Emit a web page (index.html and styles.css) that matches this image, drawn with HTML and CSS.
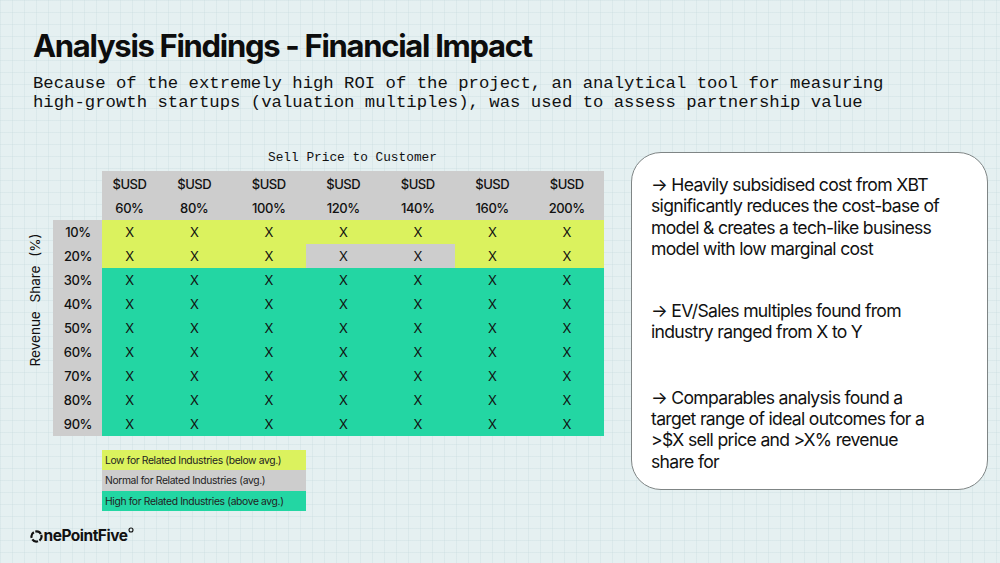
FILE: index.html
```html
<!DOCTYPE html>
<html>
<head>
<meta charset="utf-8">
<link rel="stylesheet" href="styles.css">
</head>
<body>
<div class="slide">
  <h1 class="title">Analysis Findings - Financial Impact</h1>
  <p class="subtitle">Because of the extremely high ROI of the project, an analytical tool for measuring<br>high-growth startups (valuation multiples), was used to assess partnership value</p>
  <div class="content">
    <div class="left">
      <div class="axis-x">Sell Price to Customer</div>
      <div class="table-wrap">
        <div class="axis-y"><span>Revenue Share (%)</span></div>
        <div class="grid">
          <div class="corner"></div>
          <div class="h">$USD</div><div class="h">$USD</div><div class="h">$USD</div><div class="h">$USD</div><div class="h">$USD</div><div class="h">$USD</div><div class="h">$USD</div>
          <div class="corner"></div>
          <div class="h">60%</div><div class="h">80%</div><div class="h">100%</div><div class="h">120%</div><div class="h">140%</div><div class="h">160%</div><div class="h">200%</div>

          <div class="rl">10%</div>
          <div class="c lo">X</div><div class="c lo">X</div><div class="c lo">X</div><div class="c lo">X</div><div class="c lo">X</div><div class="c lo">X</div><div class="c lo">X</div>
          <div class="rl">20%</div>
          <div class="c lo">X</div><div class="c lo">X</div><div class="c lo">X</div><div class="c no">X</div><div class="c no">X</div><div class="c lo">X</div><div class="c lo">X</div>
          <div class="rl">30%</div>
          <div class="c hi">X</div><div class="c hi">X</div><div class="c hi">X</div><div class="c hi">X</div><div class="c hi">X</div><div class="c hi">X</div><div class="c hi">X</div>
          <div class="rl">40%</div>
          <div class="c hi">X</div><div class="c hi">X</div><div class="c hi">X</div><div class="c hi">X</div><div class="c hi">X</div><div class="c hi">X</div><div class="c hi">X</div>
          <div class="rl">50%</div>
          <div class="c hi">X</div><div class="c hi">X</div><div class="c hi">X</div><div class="c hi">X</div><div class="c hi">X</div><div class="c hi">X</div><div class="c hi">X</div>
          <div class="rl">60%</div>
          <div class="c hi">X</div><div class="c hi">X</div><div class="c hi">X</div><div class="c hi">X</div><div class="c hi">X</div><div class="c hi">X</div><div class="c hi">X</div>
          <div class="rl">70%</div>
          <div class="c hi">X</div><div class="c hi">X</div><div class="c hi">X</div><div class="c hi">X</div><div class="c hi">X</div><div class="c hi">X</div><div class="c hi">X</div>
          <div class="rl">80%</div>
          <div class="c hi">X</div><div class="c hi">X</div><div class="c hi">X</div><div class="c hi">X</div><div class="c hi">X</div><div class="c hi">X</div><div class="c hi">X</div>
          <div class="rl">90%</div>
          <div class="c hi">X</div><div class="c hi">X</div><div class="c hi">X</div><div class="c hi">X</div><div class="c hi">X</div><div class="c hi">X</div><div class="c hi">X</div>
        </div>
      </div>
      <div class="legend">
        <div class="lg lo">Low for Related Industries (below avg.)</div>
        <div class="lg no">Normal for Related Industries (avg.)</div>
        <div class="lg hi">High for Related Industries (above avg.)</div>
      </div>
    </div>
    <div class="box">
      <p>→ Heavily subsidised cost from XBT significantly reduces the cost-base of model &amp; creates a tech-like business model with low marginal cost</p>
      <p>→ EV/Sales multiples found from industry ranged from X to Y</p>
      <p>→ Comparables analysis found a target range of ideal outcomes for a &gt;$X sell price and &gt;X% revenue share for</p>
    </div>
  </div>
  <div class="logo">
    <svg class="logo-o" width="13" height="13" viewBox="0 0 13 13"><circle cx="6.5" cy="6.5" r="5" fill="none" stroke="#111" stroke-width="2.2" stroke-dasharray="6.2 1.65" transform="rotate(-20 6.5 6.5)"/></svg><span>nePointFive</span><svg class="logo-ring" width="6" height="6" viewBox="0 0 6 6"><circle cx="3" cy="3" r="2" fill="none" stroke="#111" stroke-width="1.1"/></svg>
  </div>
</div>
</body>
</html>
```

FILE: styles.css
```css
html, body {
  margin: 0;
  padding: 0;
}
body {
  width: 1000px;
  height: 563px;
  overflow: hidden;
}
.slide {
  width: 1000px;
  height: 563px;
  box-sizing: border-box;
  padding: 26px 0 0 33px;
  background-color: #e5f0f1;
  background-image:
    linear-gradient(to right, rgba(200, 220, 222, 0.35) 1px, transparent 1px),
    linear-gradient(to bottom, rgba(200, 220, 222, 0.35) 1px, transparent 1px);
  background-size: 12px 12px;
  color: #111;
  font-family: Inter, "Noto Sans", sans-serif;
}
.title {
  margin: 0;
  font-size: 31px;
  line-height: 40px;
  font-weight: 700;
  letter-spacing: -1.3px;
  color: #0d0d0d;
}
.subtitle {
  margin: 8px 0 0 0;
  font-family: "Liberation Mono", "DejaVu Sans Mono", monospace;
  font-size: 17.3px;
  line-height: 19px;
  color: #111;
}
.content {
  display: flex;
  margin-top: 38px;
}
.left {
  width: 598px;
  display: flex;
  flex-direction: column;
}
.axis-x {
  margin-left: 235px;
  font-family: "Liberation Mono", "DejaVu Sans Mono", monospace;
  font-size: 12.8px;
  line-height: 16px;
  height: 16px;
}
.table-wrap {
  display: flex;
  margin-top: 5px;
}
.axis-y {
  width: 20px;
  position: relative;
}
.axis-y span {
  position: absolute;
  left: -78px;
  top: 122px;
  width: 160px;
  text-align: center;
  transform: rotate(-90deg);
  font-size: 13.5px;
  line-height: 14px;
  word-spacing: 5px;
  white-space: nowrap;
}
.grid {
  display: grid;
  grid-template-columns: 49px 55px repeat(6, 74.5px);
  grid-template-rows: 25px 24px repeat(9, 24px);
  font-size: 13px;
  letter-spacing: -0.4px;
}
.grid > div {
  display: flex;
  align-items: center;
  justify-content: center;
}
.corner {
  background: transparent;
}
.h {
  background: #cdcdcd;
  font-weight: 500;
}
.rl {
  background: #cdcdcd;
  font-weight: 500;
  padding-left: 1px;
}
.c {
  font-weight: 400;
}
.lo { background: #dbf25e; }
.no { background: #cdcdcd; }
.hi { background: #23d6a3; }
.legend {
  margin: 14px 0 0 69px;
  width: 204px;
}
.lg {
  height: 20.3px;
  display: flex;
  align-items: center;
  padding-left: 3px;
  font-size: 10.3px;
  letter-spacing: -0.35px;
  color: #222;
}
.box {
  box-sizing: border-box;
  width: 357px;
  height: 338px;
  margin-top: 2px;
  background: #fff;
  border: 1.3px solid #7f8585;
  border-radius: 30px;
  padding: 21px 43px 0 19px;
}
.box p {
  margin: 0 0 41px 0;
  font-size: 17.6px;
  line-height: 21.3px;
  letter-spacing: -0.7px;
  color: #111;
}
.box p:nth-child(2) {
  margin-bottom: 44px;
}
.logo {
  position: absolute;
  left: 30px;
  top: 527px;
  display: flex;
  align-items: center;
  font-weight: 700;
  font-size: 15.5px;
  letter-spacing: -0.5px;
  line-height: 18px;
}
.logo-o {
  margin-right: 0.5px;
}
.logo-ring {
  align-self: flex-start;
  margin-left: 1px;
  margin-top: 0px;
}
```
